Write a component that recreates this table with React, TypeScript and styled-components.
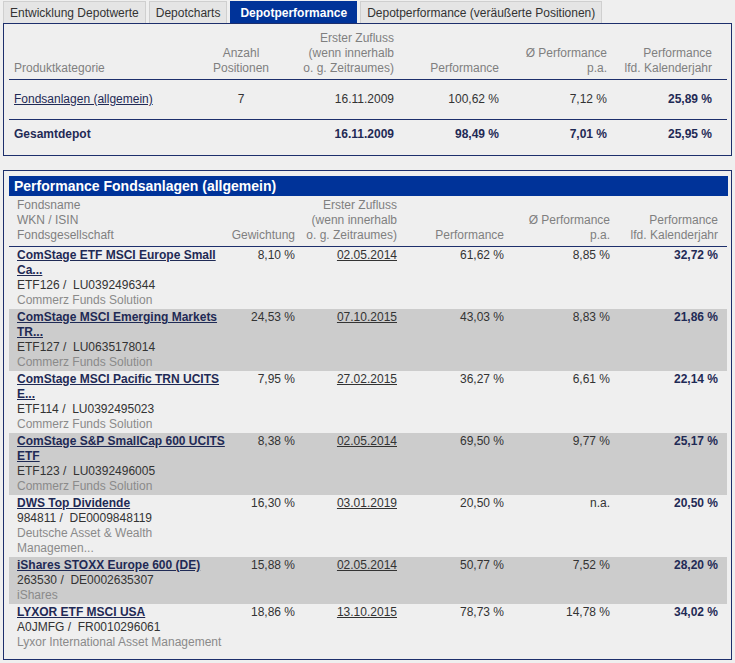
import React from "react";
import styled, {createGlobalStyle} from "styled-components";

const GlobalStyle = createGlobalStyle`
  html, body {
    margin: 0;
    padding: 0;
    background: #efefef;
  }
  body {
    font-family: "Liberation Sans", Arial, sans-serif;
    font-size: 12px;
    color: #333333;
  }
`

const Page = styled.div`
  width: 735px;
  padding: 1px 0 0 3px;
  box-sizing: border-box;
`

const Tabs = styled.div`
  display: flex;
  gap: 3px;
`

const Tab = styled.div<{ $active?: boolean }>`
  height: 22px;
  line-height: 22px;
  padding: 0 ${p => p.$active ? "9px" : "6px"};
  box-sizing: border-box;
  border: 1px solid ${p => p.$active ? "#003399" : "#cfcfcf"};
  border-bottom: none;
  background: ${p => p.$active ? "#003399" : "#e5e5e5"};
  color: ${p => p.$active ? "#ffffff" : "#333333"};
  font-weight: ${p => p.$active ? "bold" : "normal"};
  font-size: 12px;
  white-space: nowrap;
`

const Panel = styled.div<{ $top?: number }>`
  width: 729px;
  box-sizing: border-box;
  border: 1px solid #1d2f6c;
  background: #efefef;
  margin-top: ${p => p.$top ?? 0}px;
`

const SummaryGrid = styled.div`
  display: grid;
  grid-template-columns: 196px 72px 117px 105px 108px 105px;
  margin: 7px 3px 0 5px;
  padding-bottom: 6px;
`

const HeadCell = styled.div<{ $align?: string }>`
  color: #7f7f7f;
  line-height: 15px;
  text-align: ${p => p.$align ?? "right"};
  align-self: end;
`

const Divider = styled.div<{ $extend?: number }>`
  grid-column: 1 / -1;
  height: 1px;
  background: #1d2f6c;
  margin-right: -${p => p.$extend ?? 0}px;
`

const SumCell = styled.div<{ $align?: string; $bold?: boolean; $pad: number }>`
  line-height: 15px;
  padding: ${p => p.$pad}px 0;
  text-align: ${p => p.$align ?? "right"};
  font-weight: ${p => p.$bold ? "bold" : "normal"};
  color: ${p => p.$bold ? "#1f2a55" : "#333333"};
`

const CategoryLink = styled.a`
  color: #1f2a55;
  text-decoration: underline;
  padding-left: 5px;
`

const Label = styled.span`
  padding-left: 5px;
`

const HeadTopSpacer = styled.div`
  grid-column: 1 / -1;
  height: 3px;
`

const Box = styled.div`
  padding: 5px 3px 8px 5px;
`

const Bar = styled.div`
  background: #003399;
  color: #ffffff;
  font-weight: bold;
  font-size: 14px;
  height: 20px;
  line-height: 20px;
  padding-left: 5px;
`

const FundGrid = styled.div`
  display: grid;
  grid-template-columns: 219px 67px 102px 107px 106px 108px 9px;
`

const FundHead = styled.div<{ $align?: string }>`
  color: #7f7f7f;
  line-height: 15px;
  text-align: ${p => p.$align ?? "right"};
  align-self: end;
  padding-left: ${p => p.$align === "left" ? "8px" : "0"};
  padding-bottom: 3px;
  padding-top: 2px;
`

const FundRow = styled.div<{ $shade?: boolean }>`
  display: grid;
  grid-column: 1 / -1;
  grid-template-columns: subgrid;
  background: ${p => p.$shade ? "#cccccc" : "transparent"};
  padding: 1px 0;
`

const NameCell = styled.div`
  padding-left: 8px;
  padding-right: 3px;
  line-height: 15px;
`

const FundLink = styled.a`
  display: block;
  font-weight: bold;
  color: #1f2a55;
  text-decoration: underline;
`

const Ident = styled.div`
  color: #333333;
  white-space: pre;
`

const Company = styled.div`
  color: #8a8a8a;
`

const Value = styled.div<{ $bold?: boolean }>`
  line-height: 15px;
  text-align: right;
  font-weight: ${p => p.$bold ? "bold" : "normal"};
  color: ${p => p.$bold ? "#1f2a55" : "#333333"};
`

const DateLink = styled.a`
  color: #333333;
  text-decoration: underline;
`

interface Fund {
    name: string
    ident: string
    company: string
    weight: string
    date: string
    perf: string
    pa: string
    ytd: string
}

const funds: Fund[] = [
    {name: "ComStage ETF MSCI Europe Small Ca...", ident: "ETF126 /  LU0392496344", company: "Commerz Funds Solution", weight: "8,10 %", date: "02.05.2014", perf: "61,62 %", pa: "8,85 %", ytd: "32,72 %"},
    {name: "ComStage MSCI Emerging Markets TR...", ident: "ETF127 /  LU0635178014", company: "Commerz Funds Solution", weight: "24,53 %", date: "07.10.2015", perf: "43,03 %", pa: "8,83 %", ytd: "21,86 %"},
    {name: "ComStage MSCI Pacific TRN UCITS E...", ident: "ETF114 /  LU0392495023", company: "Commerz Funds Solution", weight: "7,95 %", date: "27.02.2015", perf: "36,27 %", pa: "6,61 %", ytd: "22,14 %"},
    {name: "ComStage S&P SmallCap 600 UCITS ETF", ident: "ETF123 /  LU0392496005", company: "Commerz Funds Solution", weight: "8,38 %", date: "02.05.2014", perf: "69,50 %", pa: "9,77 %", ytd: "25,17 %"},
    {name: "DWS Top Dividende", ident: "984811 /  DE0009848119", company: "Deutsche Asset & Wealth Managemen...", weight: "16,30 %", date: "03.01.2019", perf: "20,50 %", pa: "n.a.", ytd: "20,50 %"},
    {name: "iShares STOXX Europe 600 (DE)", ident: "263530 /  DE0002635307", company: "iShares", weight: "15,88 %", date: "02.05.2014", perf: "50,77 %", pa: "7,52 %", ytd: "28,20 %"},
    {name: "LYXOR ETF MSCI USA", ident: "A0JMFG /  FR0010296061", company: "Lyxor International Asset Management", weight: "18,86 %", date: "13.10.2015", perf: "78,73 %", pa: "14,78 %", ytd: "34,02 %"},
]

const tabs = ["Entwicklung Depotwerte", "Depotcharts", "Depotperformance", "Depotperformance (veräußerte Positionen)"]

const App: React.FC = () => {
    return (
        <Page>
            <GlobalStyle/>
            <Tabs>
                {tabs.map(t => <Tab key={t} $active={t === "Depotperformance"}>{t}</Tab>)}
            </Tabs>
            <Panel>
                <SummaryGrid>
                    <HeadCell $align="left"><Label>Produktkategorie</Label></HeadCell>
                    <HeadCell $align="center">Anzahl<br/>Positionen</HeadCell>
                    <HeadCell>Erster Zufluss<br/>(wenn innerhalb<br/>o. g. Zeitraumes)</HeadCell>
                    <HeadCell>Performance</HeadCell>
                    <HeadCell>Ø Performance<br/>p.a.</HeadCell>
                    <HeadCell>Performance<br/>lfd. Kalenderjahr</HeadCell>
                    <HeadTopSpacer/>
                    <Divider $extend={15}/>
                    <SumCell $align="left" $pad={12}><CategoryLink>Fondsanlagen (allgemein)</CategoryLink></SumCell>
                    <SumCell $align="center" $pad={12}>7</SumCell>
                    <SumCell $pad={12}>16.11.2009</SumCell>
                    <SumCell $pad={12}>100,62 %</SumCell>
                    <SumCell $pad={12}>7,12 %</SumCell>
                    <SumCell $pad={12} $bold>25,89 %</SumCell>
                    <Divider $extend={15}/>
                    <SumCell $align="left" $pad={7} $bold><Label>Gesamtdepot</Label></SumCell>
                    <SumCell $pad={7}/>
                    <SumCell $pad={7} $bold>16.11.2009</SumCell>
                    <SumCell $pad={7} $bold>98,49 %</SumCell>
                    <SumCell $pad={7} $bold>7,01 %</SumCell>
                    <SumCell $pad={7} $bold>25,95 %</SumCell>
                </SummaryGrid>
            </Panel>
            <Panel $top={14}>
                <Box>
                    <Bar>Performance Fondsanlagen (allgemein)</Bar>
                    <FundGrid>
                        <FundHead $align="left">Fondsname<br/>WKN / ISIN<br/>Fondsgesellschaft</FundHead>
                        <FundHead>Gewichtung</FundHead>
                        <FundHead>Erster Zufluss<br/>(wenn innerhalb<br/>o. g. Zeitraumes)</FundHead>
                        <FundHead>Performance</FundHead>
                        <FundHead>Ø Performance<br/>p.a.</FundHead>
                        <FundHead>Performance<br/>lfd. Kalenderjahr</FundHead>
                        <FundHead/>
                        <Divider/>
                        {funds.map((f, i) => (
                            <FundRow key={f.ident} $shade={i % 2 === 1}>
                                <NameCell>
                                    <FundLink>{f.name}</FundLink>
                                    <Ident>{f.ident}</Ident>
                                    <Company>{f.company}</Company>
                                </NameCell>
                                <Value>{f.weight}</Value>
                                <Value><DateLink>{f.date}</DateLink></Value>
                                <Value>{f.perf}</Value>
                                <Value>{f.pa}</Value>
                                <Value $bold>{f.ytd}</Value>
                                <div/>
                            </FundRow>
                        ))}
                    </FundGrid>
                </Box>
            </Panel>
        </Page>
    )
}

export default App;
